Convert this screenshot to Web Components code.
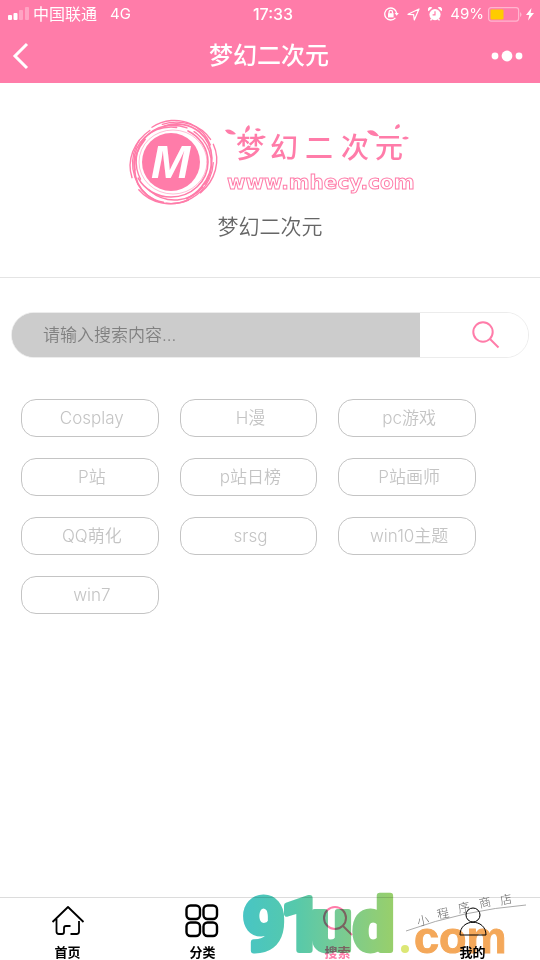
<!DOCTYPE html>
<html lang="zh-CN">
<head>
<meta charset="utf-8">
<meta name="viewport" content="width=device-width, initial-scale=1">
<title>梦幻二次元</title>
<style>
  html, body { margin: 0; height: 100%; }
  body { background: #fff; font-family: Inter, "Noto Sans CJK SC", sans-serif; }
</style>
</head>
<body>
<search-page></search-page>

<script>
const define = (name, html, setup) => {
  const template = document.createElement('template');
  template.innerHTML = html;
  customElements.define(name, class extends HTMLElement {
    constructor() {
      super();
      this.attachShadow({ mode: 'open' }).append(template.content.cloneNode(true));
    }
    connectedCallback() { if (setup) setup(this, this.shadowRoot); }
  });
};

define('status-bar', `
<style>
  :host { display: grid; grid-template-columns: 1fr auto 1fr; align-items: center; height: 28px; padding: 0 6px 0 8px; font-size: 16px; line-height: 28px; }
  div { display: flex; align-items: center; }
  .left svg { margin-right: 4px; }
  .net { margin-left: 13px; font-size: 15px; }
  .time { font-weight: 500; padding-left: 4px; }
  .right { justify-content: flex-end; gap: 4px; }
  .right .gap { margin-right: 4px; }
  .right span { font-size: 15px; }
  svg { display: block; flex: none; }
</style>
<div class="left">
  <svg width="21" height="14" fill="#fff"><rect y="8" width="4" height="5" rx="1"/><rect x="5.500" y="6" width="4" height="7" rx="1"/><g opacity=".3"><rect x="11" y="3" width="4" height="10" rx="1"/><rect x="17" width="4" height="13" rx="1"/></g></svg>
  <span>中国联通</span><span class="net">4G</span>
</div>
<span class="time">17:33</span>
<div class="right">
  <svg class="gap" width="15" height="14" viewBox="0 0 15 14" fill="none" stroke="#fff" stroke-width="1.300"><path d="M11.400 10.800A6 6 0 1 1 12.700 6.300"/><path d="M10.600 6h4.200l-2.100 2.700z" fill="#fff" stroke="none"/><rect x="4" y="6.200" width="5.600" height="4.200" fill="#fff" stroke="none"/><path d="M5.100 6.500V5a1.700 1.700 0 0 1 3.400 0v1.500"/></svg>
  <svg class="gap" width="13" height="13" viewBox="0 0 13 13" fill="none" stroke="#fff" stroke-width="1.200" stroke-linejoin="round"><path d="M1 6.300 12 1 7.300 12 6.600 6.600z"/></svg>
  <svg class="gap" width="14" height="14" viewBox="0 0 14 14"><g fill="#fff"><circle cx="7" cy="7.600" r="5.600"/><path d="M.500 4.200A2.400 2.400 0 0 1 4.200.800zM13.500 4.200A2.400 2.400 0 0 0 9.800.800zM3 11.500l1.200 1-1.200 1.300-1-.800zM11 11.500l-1.200 1 1.200 1.300 1-.800z"/></g><path d="M7 4.200v3.700H4.600" fill="none" stroke="#ff7ca9" stroke-width="1.200"/></svg>
  <span>49%</span>
  <svg width="34" height="15" viewBox="0 0 34 15"><rect x=".600" y=".600" width="30" height="13.500" rx="2.500" fill="none" stroke="#ffb5cf" stroke-width="1.200"/><rect x="2.500" y="2.500" width="13" height="10" rx="1" fill="#ffcc00"/><path d="M32 5v5q1.500-1 1.500-2.500T32 5" fill="#ffb5cf"/></svg>
  <svg width="8" height="14" viewBox="0 0 8 14" fill="#fff"><path d="M5.500 1 0 8h3.300L2 13.500 8 6H4.600z"/></svg>
</div>`);

define('title-bar', `
<style>
  :host { display: grid; grid-template-columns: 1fr auto 1fr; align-items: center; height: 55px; padding: 0 16px 0 12px; }
  h1 { margin: 0 0 0 2px; font-size: 24px; line-height: 36px; font-weight: 500; }
  button { border: 0; padding: 0; background: none; color: inherit; display: block; }
  button:last-child { justify-self: end; }
  svg { display: block; }
</style>
<button aria-label="返回"><svg width="18" height="28" fill="none" stroke="#fff" stroke-width="3"><path d="M15 2 3 14l12 12"/></svg></button>
<h1><slot></slot></h1>
<button aria-label="更多"><svg width="33" height="12" fill="#fff"><circle cx="4" cy="6" r="3.400"/><circle cx="16" cy="6" r="5.400"/><circle cx="28" cy="6" r="3.400"/></svg></button>`);

define('site-logo', `
<style>
  :host { display: block; }
  svg { display: block; width: 286px; height: 88px; margin: 0 auto; overflow: visible; }
  .m { font: italic bold 47px "Liberation Sans", sans-serif; fill: #fff; }
  .cn { font: 500 28px "Noto Sans CJK SC", sans-serif; }
  .url { font: bold 20px "DejaVu Sans", sans-serif; fill: #fff; stroke: #ff7ca9; stroke-width: 1; }
</style>
<svg viewBox="0 0 286 88" fill="#ff7ca9" role="img" aria-label="梦幻二次元">
  <circle cx="44" cy="43" r="29"/>
  <g fill="none" stroke="#ff7ca9" stroke-linecap="round">
    <ellipse cx="46" cy="43" rx="34" ry="32" stroke-width="1" opacity=".5"/>
    <ellipse cx="44" cy="43" rx="37" ry="35" stroke-width="1.600" stroke-dasharray="96 9 70 12"/>
    <ellipse cx="47" cy="43" rx="38" ry="37" stroke-width="1.400" stroke-dasharray="60 14 90 8" transform="rotate(40 46 43)"/>
    <ellipse cx="45" cy="44" rx="41" ry="37" stroke-width="1.800" stroke-dasharray="80 24" transform="rotate(-50 46 43)"/>
    <ellipse cx="46" cy="43" rx="42" ry="40" stroke-width="1.300" stroke-dasharray="70 18" transform="rotate(115 46 43)"/>
    <ellipse cx="46" cy="44" rx="44" ry="40" stroke-width="1.400" stroke-dasharray="54 14" transform="rotate(-25 46 43)"/>
  </g>
  <text class="m" x="24" y="59">M</text>
  <text class="cn" x="109 143 178 214 248" y="39">梦幻二次元</text>
  <path d="M98 11q6-2 11 4-8 2-11-4M118 14q0-6 4-8 3 5-4 8M128 10q4-2 6 1-4 3-6-1M132 18q4-3 7 0-4 3-7 0M240 12q7-3 12 5-9 1-12-5M268 10q0-4 4-5 3 4-4 5M275 19q4-3 7 0-4 3-7 0"/>
  <text class="url" x="100" y="70">www.mhecy.com</text>
</svg>`);

define('brand-panel', `
<style>
  :host { display: block; padding: 36px 0 34px; border-bottom: 1px solid #e4e4e4; text-align: center; }
  p { margin: 4px 0 0; font-size: 21px; line-height: 32px; font-weight: 350; color: #666; }
</style>
<site-logo></site-logo>
<p><slot></slot></p>`);

define('search-box', `
<style>
  :host { display: block; padding: 34px 11px 0 11px; }
  form { display: flex; height: 46px; box-sizing: border-box; border: 1px solid #ececec; border-radius: 23px; overflow: hidden; background: linear-gradient(90deg, #ccc 50%, #fff 50%) border-box; }
  input { flex: none; width: 79%; min-width: 0; box-sizing: border-box; margin: 0; border: 0; border-radius: 0; padding: 0 31px; background: #ccc; font: 350 17px Inter, "Noto Sans CJK SC", sans-serif; color: #333; outline: 0; }
  input::placeholder { color: #808080; opacity: 1; }
  button { flex: 1; border: 0; padding: 0 0 0 24px; background: #fff; display: grid; place-items: center; }
  svg { display: block; }
</style>
<form onsubmit="return false">
  <input type="text" aria-label="搜索内容" placeholder="请输入搜索内容...">
  <button aria-label="搜索"><svg width="28" height="28" fill="none" stroke="#ff7ca9" stroke-width="2"><circle cx="11" cy="11" r="9.700"/><path d="m18 18 8.500 8.500"/></svg></button>
</form>`);

define('tag-item', `
<style>
  :host { display: block; }
  button { display: block; width: 100%; height: 38px; box-sizing: border-box; margin: 0; border: 1px solid #c4c4c4; border-radius: 15px; padding: 0 0 0 4px; background: none; color: #c4c4c4; font: 350 17px/36px Inter, "Noto Sans CJK SC", sans-serif; text-align: center; white-space: nowrap; }
</style>
<button><slot></slot></button>`);

define('tag-grid', `
<style>
  :host { display: grid; grid-template-columns: repeat(3, 1fr); gap: 21px; padding: 41px 64px 21px 21px; }
</style>
<slot></slot>`);

const icons = {
  home: '<path d="M1.500 18 17 3l15.500 15M5.500 15v12.500Q5.500 30 8 30h3q2 0 2-2v-4q0-2 2-2h4.500M28 17v10.500q0 2.500-2.500 2.500h-6" stroke-width="1.800"/>',
  grid: '<g stroke-width="2.400"><rect x="1.500" y="1.500" width="13.500" height="13.500" rx="4"/><rect x="18.500" y="1.500" width="13.500" height="13.500" rx="4"/><rect x="1.500" y="18.500" width="13.500" height="13.500" rx="4"/><rect x="18.500" y="18.500" width="13.500" height="13.500" rx="4"/></g>',
  search: '<circle cx="14" cy="14" r="11" stroke-width="2"/><path d="m22 22 9 9" stroke-width="2"/>',
  user: '<circle cx="17" cy="11" r="7" stroke-width="1"/><path d="M4 31C4 14 30 14 30 31z" stroke-width="1"/>'
};

define('tab-item', `
<style>
  :host { display: block; flex: 1; color: #000; }
  :host([active]) { color: #ff7ca9; }
  a { display: flex; flex-direction: column; align-items: center; padding-top: 6px; color: inherit; text-decoration: none; font-size: 13px; line-height: 20px; font-weight: 600; }
  svg { display: block; margin-bottom: 4px; }
  :host([icon="grid"]) svg { margin-right: 2px; }
</style>
<a href="#"><svg width="34" height="34" fill="none" stroke="currentColor" stroke-linejoin="round"></svg><slot></slot></a>`,
(host, root) => { root.querySelector('svg').innerHTML = icons[host.getAttribute('icon')]; });

define('tab-bar', `
<style>
  :host { display: flex; height: 62px; border-top: 1px solid #dcdcdc; background: #fff; }
</style>
<slot></slot>`);

define('store-badge', `
<style>
  :host { position: absolute; right: 10px; bottom: 0; pointer-events: none; mix-blend-mode: multiply; }
  svg { display: block; overflow: visible; }
  .block { font: bold 73px Roboto, sans-serif; stroke-width: 6; stroke-linejoin: round; }
  .com { font: bold 45px "Liberation Sans", sans-serif; fill: #f4a85a; stroke: #f4a85a; stroke-width: 1; }
  .hand { font: 300 12px "Noto Sans CJK SC", sans-serif; fill: #666; }
</style>
<svg width="290" height="70" viewBox="0 0 290 70">
  <defs><linearGradient id="g" gradientUnits="userSpaceOnUse" x1="3" y1="0" x2="153" y2="0"><stop stop-color="#48c5c4"/><stop offset=".35" stop-color="#56c9ab"/><stop offset=".65" stop-color="#78cb93"/><stop offset="1" stop-color="#98cf6b"/></linearGradient></defs>
  <text class="block" x="3 41 71 113" y="60" fill="url(#g)" stroke="url(#g)">91ud</text>
  <circle cx="165" cy="59" r="4" fill="#dce775"/>
  <text class="com" x="174" y="63">com</text>
  <path d="M166 41Q224 20 286 15" fill="none" stroke="#aaa"/>
  <text class="hand" x="178 198 219 240 261" y="36 29 23 18 15" rotate="-12">小程序商店</text>
</svg>`);

define('search-page', `
<style>
  :host { display: flex; flex-direction: column; min-height: 100%; position: relative; }
  header { background: #ff7ca9; color: #fff; }
  main { flex: 1; }
</style>
<header><status-bar></status-bar><title-bar>梦幻二次元</title-bar></header>
<main>
  <brand-panel>梦幻二次元</brand-panel>
  <search-box></search-box>
  <tag-grid>
    <tag-item>Cosplay</tag-item><tag-item>H漫</tag-item><tag-item>pc游戏</tag-item>
    <tag-item>P站</tag-item><tag-item>p站日榜</tag-item><tag-item>P站画师</tag-item>
    <tag-item>QQ萌化</tag-item><tag-item>srsg</tag-item><tag-item>win10主题</tag-item>
    <tag-item>win7</tag-item>
  </tag-grid>
</main>
<tab-bar>
  <tab-item icon="home">首页</tab-item><tab-item icon="grid">分类</tab-item>
  <tab-item icon="search" active>搜索</tab-item><tab-item icon="user">我的</tab-item>
</tab-bar>
<store-badge></store-badge>`);
</script>
</body>
</html>
